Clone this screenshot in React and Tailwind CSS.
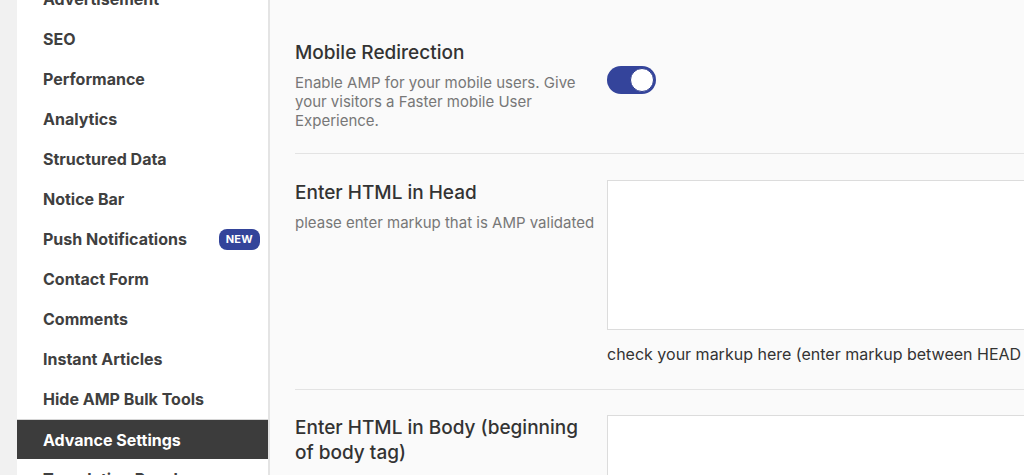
import React from 'react'

const menu = [
  'Advertisement',
  'SEO',
  'Performance',
  'Analytics',
  'Structured Data',
  'Notice Bar',
  'Push Notifications',
  'Contact Form',
  'Comments',
  'Instant Articles',
  'Hide AMP Bulk Tools',
  'Advance Settings',
  'Translation Panel',
]

const Sidebar = () => {
  return (
    <div className="w-[253px] shrink-0 bg-white border-r-2 border-[#e4e4e4]">
      <ul className="-mt-[21px]">
        {menu.map((item) => {
          const active = item === 'Advance Settings'
          return (
            <li
              key={item}
              className={`h-10 pl-[26px] pr-[8px] flex items-center justify-between text-[16px] font-bold ${
                active ? 'bg-[#3c3c3c] text-white border-t border-[#d6d6d6]' : 'text-[#404040]'
              }`}
            >
              <span>{item}</span>
              {item === 'Push Notifications' && (
                <span className="h-[21px] px-[7px] rounded-[8px] bg-[#33449a] text-white text-[11px] font-bold flex items-center tracking-wide">
                  NEW
                </span>
              )}
            </li>
          )
        })}
      </ul>
    </div>
  )
}

const Toggle = () => (
  <div className="relative w-[49px] h-[28px] rounded-full bg-[#34449b]">
    <span className="absolute right-[2px] top-[2px] w-6 h-6 rounded-full bg-white border border-[#2d3c8f]" />
  </div>
)

const App = () => {
  return (
    <div
      className="h-[475px] w-[1024px] overflow-hidden flex bg-[#f1f1f1] pl-[17px]"
      style={{ fontFamily: 'Inter, "Liberation Sans", sans-serif' }}
    >
      <Sidebar />

      {/* settings table */}
      <div className="flex-1 bg-[#fafafa] pl-[25px] overflow-hidden">
        {/* Mobile Redirection */}
        <div className="flex border-b border-[#e3e3e3]">
          <div className="w-[312px] shrink-0 pt-[41px] pb-[23px] pr-[20px]">
            <h3 className="text-[19px] leading-[24px] font-medium text-[#333]">Mobile Redirection</h3>
            <p className="mt-[8px] text-[15px] leading-[19px] text-[#777]">
              Enable AMP for your mobile users. Give your visitors a Faster mobile User Experience.
            </p>
          </div>
          <div className="pt-[66px]">
            <Toggle />
          </div>
        </div>

        {/* Head */}
        <div className="flex border-b border-[#e3e3e3]">
          <div className="w-[312px] shrink-0 pt-[27px] pr-[10px]">
            <h3 className="text-[19px] leading-[24px] font-medium text-[#333]">Enter HTML in Head</h3>
            <p className="mt-[8px] text-[15px] leading-[19px] text-[#777]">
              please enter markup that is AMP validated
            </p>
          </div>
          <div className="pt-[26px] pb-[24px]">
            <div className="w-[520px] h-[150px] bg-white border border-[#dcdcdc]" />
            <p className="mt-[13px] text-[16px] leading-[22px] text-[#333] whitespace-nowrap">
              check your markup here (enter markup between HEAD tag)
            </p>
          </div>
        </div>

        {/* Body */}
        <div className="flex">
          <div className="w-[312px] shrink-0 pt-[25px] pr-[20px]">
            <h3 className="text-[19px] leading-[25px] font-medium text-[#333]">
              Enter HTML in Body (beginning of body tag)
            </h3>
            <p className="mt-[8px] text-[15px] leading-[19px] text-[#777]">
              please enter markup that is AMP validated
            </p>
          </div>
          <div className="pt-[25px]">
            <div className="w-[520px] h-[150px] bg-white border border-[#dcdcdc]" />
          </div>
        </div>
      </div>
    </div>
  )
}

export default App
